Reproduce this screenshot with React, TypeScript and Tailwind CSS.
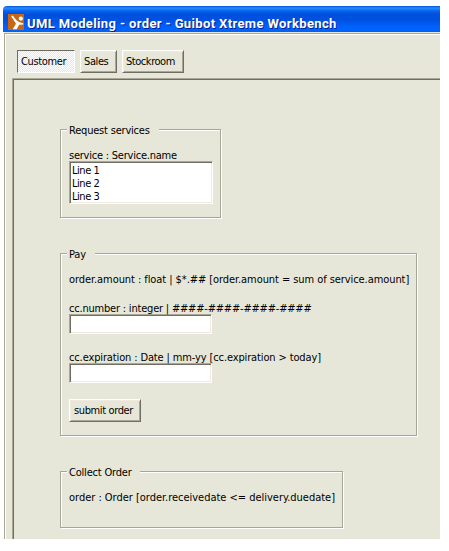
import type { ReactNode } from "react";

const raised =
  "border border-t-white border-l-white border-r-[#716d62] border-b-[#716d62] shadow-[inset_1px_1px_#f1e9df,inset_-1px_-1px_#aaa796]";
const sunken =
  "border border-t-[#aaa796] border-l-[#aaa796] border-r-white border-b-white bg-white shadow-[inset_1px_1px_#716d62,inset_-1px_-1px_#f1e9df]";

function Group({ title, gap, className, children }: { title: string; gap: string; className: string; children: ReactNode }) {
  return (
    <section className={`border border-[#a7a797] pl-2 shadow-[inset_1px_1px_#fff,1px_1px_#fff] ${className}`}>
      <h2 className={`-ml-[2px] -mt-[6px] h-[14px] bg-[#e6e7d8] pl-[2px] tracking-[-0.2px] ${gap}`}>{title}</h2>
      {children}
    </section>
  );
}

function Logo() {
  return (
    <svg className="h-4 w-4 shrink-0" viewBox="0 0 16 16">
      <rect width="16" height="16" fill="#c9660f" />
      <path d="M3.2 2.2 4.6 1.4 8.5 6.2 11.5 8.2 15.2 9.2V10.6L11.2 10.8 8.6 15.2H4.6L8 9.8z" fill="#fff" />
      <circle cx="12.8" cy="4.6" r="2.1" fill="#fff" />
    </svg>
  );
}

export default function App() {
  return (
    <div className="h-[551px] w-[449px] overflow-hidden bg-white pl-[3px] pt-[6px] text-[11px] leading-[14px] whitespace-nowrap text-black [font-family:'DejaVu_Sans_Condensed','DejaVu_Sans',sans-serif]">
      <div className="flex h-[533px] w-[437px] flex-col">
        <header className="flex h-[26px] shrink-0 items-start rounded-tl-[4px] bg-[linear-gradient(180deg,#0054d8_0,#298bff_2px,#0864ed_5px,#0050dc_8px,#0051df_14px,#0060fb_20px,#0064ff_24px,#0060f4_26px)] pl-[5px] pt-[8px]">
          <Logo />
          <h1 className="ml-[3px] text-[13px] font-bold leading-5 tracking-[0.37px] text-white [font-family:Roboto,sans-serif] [text-shadow:1px_1px_#06218b]">
            UML Modeling - order - Guibot Xtreme Workbench
          </h1>
        </header>
        <div className="ml-px flex min-h-0 flex-1 flex-col bg-[#e6e7d8] pt-px">
          <div className="flex min-h-0 flex-1 flex-col border-l border-t border-[#aaa796] pl-[7px] pt-[16px] shadow-[inset_1px_1px_#fff]">
            <nav className="flex gap-[5px] pl-[5px]">
              <button className="h-[23px] w-[58px] border border-t-[#716d62] border-l-[#716d62] border-r-white border-b-white bg-[conic-gradient(#fff_25%,#e6e7d8_0_50%,#fff_0_75%,#e6e7d8_0)] bg-[length:2px_2px] pl-[3px] text-left tracking-[-0.35px]">
                Customer
              </button>
              <button className={`h-[23px] w-[37px] pl-[3px] text-left tracking-[-0.4px] ${raised}`}>Sales</button>
              <button className={`h-[23px] w-[62px] pl-[3px] text-left tracking-[-0.45px] ${raised}`}>Stockroom</button>
            </nav>
            <main className="mt-[5px] min-h-0 flex-1 border-l border-t border-[#aaa796] pl-[47px] pt-[50px] shadow-[inset_1px_1px_#716d62]">
              <Group title="Request services" gap="w-[92px]" className="h-[89px] w-[161px]">
                <p className="mt-[11px] tracking-[-0.23px]">service : Service.name</p>
                <ul className={`-mt-[2px] h-[43px] w-[144px] pl-[2px] pt-[2px] leading-[13px] tracking-[-0.45px] ${sunken}`}>
                  <li>Line 1</li>
                  <li>Line 2</li>
                  <li>Line 3</li>
                </ul>
              </Group>
              <Group title="Pay" gap="w-[28px]" className="mt-[35px] h-[183px] w-[357px]">
                <p className="mt-[11px] tracking-[-0.07px]">order.amount : float | $*.## [order.amount = sum of service.amount]</p>
                <p className="mt-[15px] tracking-[-0.2px]">cc.number : integer | ####-####-####-####</p>
                <input className={`-mt-[2px] block h-[20px] w-[143px] ${sunken}`} />
                <p className="mt-[17px] tracking-[-0.13px]">cc.expiration : Date | mm-yy [cc.expiration &gt; today]</p>
                <input className={`-mt-[2px] block h-[20px] w-[143px] ${sunken}`} />
                <button className={`mt-[16px] block h-[23px] w-[72px] pl-[4px] text-left tracking-[-0.38px] ${raised}`}>
                  submit order
                </button>
              </Group>
              <Group title="Collect Order" gap="w-[73px]" className="mt-[35px] h-[57px] w-[283px]">
                <p className="mt-[11px] tracking-[-0.02px]">order : Order [order.receivedate &lt;= delivery.duedate]</p>
              </Group>
            </main>
          </div>
        </div>
      </div>
    </div>
  );
}
